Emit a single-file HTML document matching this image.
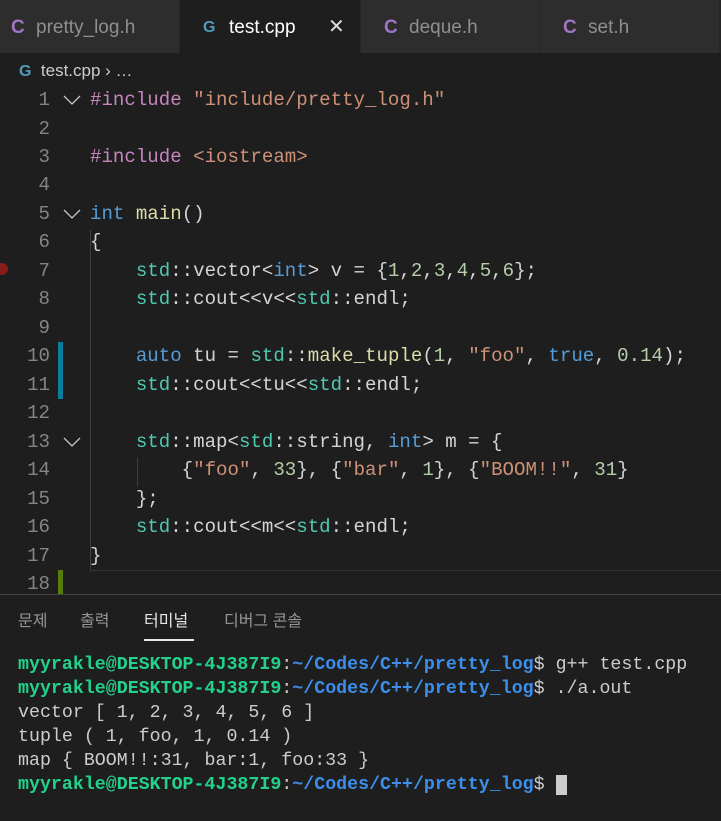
<!DOCTYPE html>
<html><head><meta charset="utf-8"><style>
*{margin:0;padding:0;box-sizing:border-box}
body{width:721px;height:821px;background:#1e1e1e;overflow:hidden;font-family:"Liberation Sans","Noto Sans CJK KR",sans-serif;position:relative}
.tabs{position:absolute;left:0;top:0;width:721px;height:53px;background:#252526}
.tab{position:absolute;top:0;height:53px;background:#2d2d2d;color:#8f8f8f;font-size:19px;line-height:55px;white-space:nowrap}
.tab .c{position:absolute;left:11px;color:#a074c4;font-weight:bold}
.tab .t{position:absolute;left:36px}
.cpp{color:#519aba;font-weight:bold;font-size:16px}
.crumb{position:absolute;top:58px;left:19px;color:#cccccc;font-size:17px;line-height:26px;white-space:nowrap}
.ln{position:absolute;left:0;width:721px;height:28.47px;line-height:28.47px;font-family:"Liberation Mono",monospace;font-size:19.1px;white-space:pre}
.num{position:absolute;left:0;width:50px;color:#858585;text-align:right}
.fold{position:absolute;left:63px;top:9px}
.src{position:absolute;left:90px;color:#d4d4d4}
.k{color:#569cd6}.s{color:#ce9178}.n{color:#b5cea8}.t2{color:#4ec9b0}.f{color:#dcdcaa}.p{color:#c586c0}
.panel{position:absolute;left:0;top:594px;width:721px;height:227px;border-top:1px solid #444;background:#1e1e1e}
.ptab{position:absolute;top:14px;font-size:16px;color:#969696;line-height:26px}
.term{position:absolute;left:18px;top:58px;font-family:"Liberation Mono",monospace;font-size:18.3px;line-height:24px;color:#cccccc;white-space:pre}
.g{color:#23d18b;font-weight:bold}.b{color:#3b8eea;font-weight:bold}
</style></head><body>
<div class="tabs">
<div class="tab" style="left:0;width:179px"><span class="c">C</span><span class="t">pretty_log.h</span></div>
<div class="tab" style="left:180px;width:180px;background:#1e1e1e;color:#fff"><span class="cpp" style="position:absolute;left:23px">G</span><span style="position:absolute;left:49px">test.cpp</span><span style="position:absolute;left:148px;color:#ddd;font-size:20px">✕</span></div>
<div class="tab" style="left:361px;width:178px"><span class="c" style="left:23px">C</span><span class="t" style="left:48px">deque.h</span></div>
<div class="tab" style="left:540px;width:179px"><span class="c" style="left:23px">C</span><span class="t" style="left:48px">set.h</span></div>
</div>

<div class="crumb"><span class="cpp">G</span>&nbsp; test.cpp › …</div>

<div style="position:absolute;left:90px;top:230px;width:1px;height:342px;background:#404040"></div>
<div style="position:absolute;left:137px;top:458px;width:1px;height:28px;background:#404040"></div>
<div style="position:absolute;left:58px;top:342px;width:5px;height:57px;background:#0c7d9d"></div>
<div style="position:absolute;left:58px;top:570px;width:5px;height:24px;background:#587c0c"></div>
<div style="position:absolute;left:-4px;top:263px;width:12px;height:12px;border-radius:50%;background:#8a1b1b"></div>
<div style="position:absolute;left:90px;top:570px;width:631px;height:1px;background:#333"></div>

<div class="ln" style="top:86px"><span class="num">1</span><svg class="fold" width="18" height="10"><path d="M1 1 L9 9 L17 1" stroke="#c5c5c5" fill="none" stroke-width="1.3"/></svg><span class="src"><span class="p">#include</span> <span class="s">"include/pretty_log.h"</span></span></div>
<div class="ln" style="top:114.5px"><span class="num">2</span></div>
<div class="ln" style="top:143px"><span class="num">3</span><span class="src"><span class="p">#include</span> <span class="s">&lt;iostream&gt;</span></span></div>
<div class="ln" style="top:171.4px"><span class="num">4</span></div>
<div class="ln" style="top:199.9px"><span class="num">5</span><svg class="fold" width="18" height="10"><path d="M1 1 L9 9 L17 1" stroke="#c5c5c5" fill="none" stroke-width="1.3"/></svg><span class="src"><span class="k">int</span> <span class="f">main</span>()</span></div>
<div class="ln" style="top:228.4px"><span class="num">6</span><span class="src">{</span></div>
<div class="ln" style="top:256.8px"><span class="num">7</span><span class="src">    <span class="t2">std</span>::vector&lt;<span class="k">int</span>&gt; v = {<span class="n">1</span>,<span class="n">2</span>,<span class="n">3</span>,<span class="n">4</span>,<span class="n">5</span>,<span class="n">6</span>};</span></div>
<div class="ln" style="top:285.3px"><span class="num">8</span><span class="src">    <span class="t2">std</span>::cout&lt;&lt;v&lt;&lt;<span class="t2">std</span>::endl;</span></div>
<div class="ln" style="top:313.8px"><span class="num">9</span></div>
<div class="ln" style="top:342.2px"><span class="num">10</span><span class="src">    <span class="k">auto</span> tu = <span class="t2">std</span>::<span class="f">make_tuple</span>(<span class="n">1</span>, <span class="s">"foo"</span>, <span class="k">true</span>, <span class="n">0.14</span>);</span></div>
<div class="ln" style="top:370.7px"><span class="num">11</span><span class="src">    <span class="t2">std</span>::cout&lt;&lt;tu&lt;&lt;<span class="t2">std</span>::endl;</span></div>
<div class="ln" style="top:399.2px"><span class="num">12</span></div>
<div class="ln" style="top:427.6px"><span class="num">13</span><svg class="fold" width="18" height="10"><path d="M1 1 L9 9 L17 1" stroke="#c5c5c5" fill="none" stroke-width="1.3"/></svg><span class="src">    <span class="t2">std</span>::map&lt;<span class="t2">std</span>::string, <span class="k">int</span>&gt; m = {</span></div>
<div class="ln" style="top:456.1px"><span class="num">14</span><span class="src">        {<span class="s">"foo"</span>, <span class="n">33</span>}, {<span class="s">"bar"</span>, <span class="n">1</span>}, {<span class="s">"BOOM!!"</span>, <span class="n">31</span>}</span></div>
<div class="ln" style="top:484.6px"><span class="num">15</span><span class="src">    };</span></div>
<div class="ln" style="top:513px"><span class="num">16</span><span class="src">    <span class="t2">std</span>::cout&lt;&lt;m&lt;&lt;<span class="t2">std</span>::endl;</span></div>
<div class="ln" style="top:541.5px"><span class="num">17</span><span class="src">}</span></div>
<div class="ln" style="top:570px"><span class="num">18</span></div>

<div class="panel">
<span class="ptab" style="left:18px">문제</span>
<span class="ptab" style="left:80px">출력</span>
<span class="ptab" style="left:144px;color:#e7e7e7">터미널</span>
<div style="position:absolute;left:144px;top:44px;width:50px;height:2px;background:#e7e7e7"></div>
<span class="ptab" style="left:224px">디버그 콘솔</span>
<div class="term"><span class="g">myyrakle@DESKTOP-4J387I9</span>:<span class="b">~/Codes/C++/pretty_log</span>$ g++ test.cpp
<span class="g">myyrakle@DESKTOP-4J387I9</span>:<span class="b">~/Codes/C++/pretty_log</span>$ ./a.out
vector [ 1, 2, 3, 4, 5, 6 ]
tuple ( 1, foo, 1, 0.14 )
map { BOOM!!:31, bar:1, foo:33 }
<span class="g">myyrakle@DESKTOP-4J387I9</span>:<span class="b">~/Codes/C++/pretty_log</span>$ <span style="background:#ccc"> </span></div>
</div>
</body></html>
